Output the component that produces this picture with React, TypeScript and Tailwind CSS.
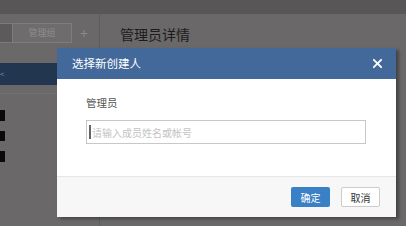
import React from 'react';

const cjk = { fontFamily: '"Noto Sans CJK SC", "Liberation Sans", sans-serif' };

const App: React.FC = () => {
  return (
    <div className="relative w-[406px] h-[226px] overflow-hidden bg-[#6a6868]" style={cjk}>
      {/* dimmed page behind */}
      <div className="h-[14px] bg-[#585656]" />
      <div className="flex h-[212px]">
        <div className="w-[100px] shrink-0 border-r border-[#5e5c5c] flex flex-col">
          <div className="flex items-center pt-[9px] h-[29px]">
            <div className="w-[12px] h-[20px] bg-[#5c5a5a] border-y border-[#7c7a7a]" />
            <div className="w-[60px] h-[20px] border border-[#7e7c7c] bg-[#6e6c6c] flex items-center justify-center text-[9px] text-[#8e8c8c]">
              管理组
            </div>
            <span className="ml-[8px] text-[14px] leading-none text-[#8a8888]">+</span>
          </div>
          <div className="mt-[20px] h-[22px] bg-[#233650] flex items-center text-[8px] text-[#6f8fb8]">
            <span>&lt;</span>
          </div>
          <div className="h-[1px] bg-[#727070] mt-[8px]" />
          <div className="flex flex-col gap-[10px] mt-[16px]">
            <div className="w-[5px] h-[11px] bg-[#0a0a0a]" />
            <div className="w-[5px] h-[10px] bg-[#0a0a0a]" />
            <div className="w-[5px] h-[11px] bg-[#0a0a0a]" />
          </div>
        </div>
        <div className="flex-1 pl-[20px] pt-[10px]">
          <div className="text-[14px] leading-[20px] text-[#1c1c1c]">管理员详情</div>
        </div>
      </div>

      {/* modal */}
      <div className="absolute left-[57px] top-[48px] w-[339px] h-[169px] bg-white flex flex-col shadow-[3px_2px_3px_rgba(0,0,0,0.35)]">
        <div className="h-[31px] bg-[#43699a] flex items-center justify-between pl-[15px] pr-[13px]">
          <span className="text-[11.5px] text-white">选择新创建人</span>
          <svg width="11" height="11" viewBox="0 0 12 12">
            <path d="M2 2 L10 10 M10 2 L2 10" stroke="#ffffff" strokeWidth="2" strokeLinecap="round" />
          </svg>
        </div>
        <div className="h-[97px] pl-[29px] pt-[17px]">
          <div className="text-[10.5px] leading-[14px] text-[#555555]">管理员</div>
          <div className="mt-[10px] w-[280px] h-[24px] border border-[#c8c8c8] flex items-center pl-[2px]">
            <div className="w-[2px] h-[14px] bg-[#666666]" />
            <span className="ml-[1px] text-[10px] text-[#c4c4c4]">请输入成员姓名或帐号</span>
          </div>
        </div>
        <div className="flex-1 bg-[#f7f7f7] border-t border-[#e6e6e6] flex items-center justify-end gap-[11px] pr-[16px]">
          <button className="w-[39px] h-[20px] bg-[#3a80c6] text-white text-[10px] rounded-[2px]">确定</button>
          <button className="w-[39px] h-[20px] bg-white border border-[#cccccc] text-[#333333] text-[10px] rounded-[2px]">取消</button>
        </div>
      </div>
    </div>
  );
};

export default App;
